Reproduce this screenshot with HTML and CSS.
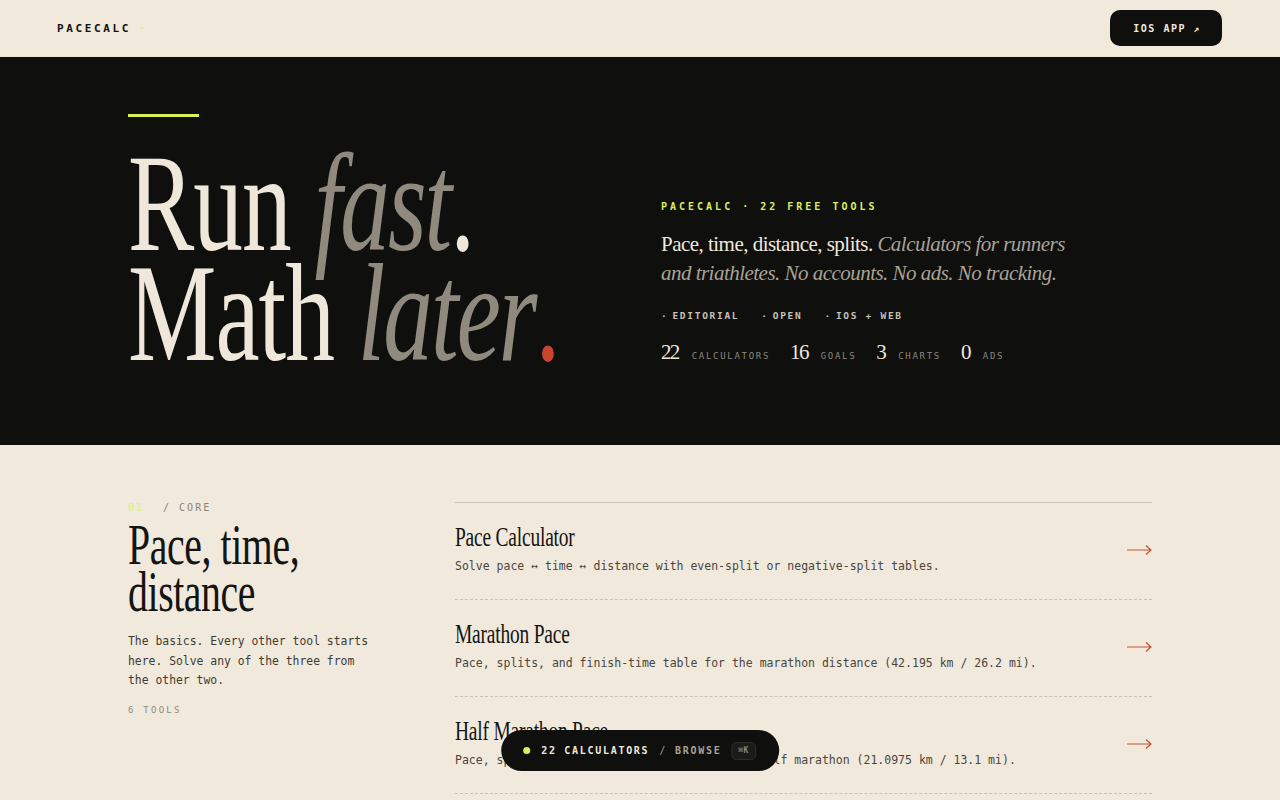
FILE: index.html
```html
<!DOCTYPE html>
<html lang="en">
<head>
    <!-- Page metadata and stylesheet -->
    <meta charset="UTF-8">
    <meta name="viewport" content="width=device-width, initial-scale=1.0">
    <title>PaceCalc — Run fast. Math later.</title>
    <link rel="stylesheet" href="styles.css">
</head>
<body>
    <!-- Top bar with the brand and the app link -->
    <header class="topbar">
        <a class="brand" href="#">PACECALC<span class="brand-dot">·</span></a>
        <a class="app-btn" href="#">IOS APP ↗</a>
    </header>

    <!-- Dark hero block -->
    <section class="hero">
        <div class="hero-inner">
            <div class="hero-left">
                <div class="hero-rule"></div>
                <h1 class="hero-title">
                    <span class="line">Run <em>fast</em>.</span>
                    <span class="line">Math <em>later</em><span class="stop-red">.</span></span>
                </h1>
            </div>
            <div class="hero-right">
                <p class="eyebrow">PACECALC · 22 FREE TOOLS</p>
                <p class="lede">Pace, time, distance, splits. <em>Calculators for runners and triathletes. No accounts. No ads. No tracking.</em></p>
                <ul class="tags">
                    <li><span class="tag-dot">·</span>EDITORIAL</li>
                    <li><span class="tag-dot">·</span>OPEN</li>
                    <li><span class="tag-dot">·</span>IOS + WEB</li>
                </ul>
                <div class="stats">
                    <span class="num">22</span><span class="lbl">CALCULATORS</span>
                    <span class="num">16</span><span class="lbl">GOALS</span>
                    <span class="num">3</span><span class="lbl">CHARTS</span>
                    <span class="num">0</span><span class="lbl">ADS</span>
                </div>
            </div>
        </div>
    </section>

    <!-- Calculator groups -->
    <section class="group">
        <div class="group-info">
            <p class="group-kicker"><span class="group-no">01</span><span>/ CORE</span></p>
            <h2 class="group-title">Pace, time,<br>distance</h2>
            <p class="group-desc">The basics. Every other tool starts here. Solve any of the three from the other two.</p>
            <p class="group-count">6 TOOLS</p>
        </div>
        <ul class="tool-list">
            <li class="tool">
                <div class="tool-text">
                    <h3 class="tool-name">Pace Calculator</h3>
                    <p class="tool-desc">Solve pace ↔ time ↔ distance with even-split or negative-split tables.</p>
                </div>
                <svg class="tool-arrow" width="25" height="12" viewBox="0 0 25 12"><path d="M0 6H24M19 1.5L24 6L19 10.5" fill="none" stroke="currentColor" stroke-width="1.2"/></svg>
            </li>
            <li class="tool">
                <div class="tool-text">
                    <h3 class="tool-name">Marathon Pace</h3>
                    <p class="tool-desc">Pace, splits, and finish-time table for the marathon distance (42.195 km / 26.2 mi).</p>
                </div>
                <svg class="tool-arrow" width="25" height="12" viewBox="0 0 25 12"><path d="M0 6H24M19 1.5L24 6L19 10.5" fill="none" stroke="currentColor" stroke-width="1.2"/></svg>
            </li>
            <li class="tool">
                <div class="tool-text">
                    <h3 class="tool-name">Half Marathon Pace</h3>
                    <p class="tool-desc">Pace, splits, and finish-time table for the half marathon (21.0975 km / 13.1 mi).</p>
                </div>
                <svg class="tool-arrow" width="25" height="12" viewBox="0 0 25 12"><path d="M0 6H24M19 1.5L24 6L19 10.5" fill="none" stroke="currentColor" stroke-width="1.2"/></svg>
            </li>
            <li class="tool">
                <div class="tool-text">
                    <h3 class="tool-name">10K Pace</h3>
                    <p class="tool-desc">Pace, splits, and finish-time table for the 10 kilometre distance (6.2 mi).</p>
                </div>
                <svg class="tool-arrow" width="25" height="12" viewBox="0 0 25 12"><path d="M0 6H24M19 1.5L24 6L19 10.5" fill="none" stroke="currentColor" stroke-width="1.2"/></svg>
            </li>
            <li class="tool">
                <div class="tool-text">
                    <h3 class="tool-name">5K Pace</h3>
                    <p class="tool-desc">Pace, splits, and finish-time table for the 5 kilometre distance (3.1 mi).</p>
                </div>
                <svg class="tool-arrow" width="25" height="12" viewBox="0 0 25 12"><path d="M0 6H24M19 1.5L24 6L19 10.5" fill="none" stroke="currentColor" stroke-width="1.2"/></svg>
            </li>
            <li class="tool">
                <div class="tool-text">
                    <h3 class="tool-name">Split Calculator</h3>
                    <p class="tool-desc">Lap-by-lap splits for any distance, with custom lap length.</p>
                </div>
                <svg class="tool-arrow" width="25" height="12" viewBox="0 0 25 12"><path d="M0 6H24M19 1.5L24 6L19 10.5" fill="none" stroke="currentColor" stroke-width="1.2"/></svg>
            </li>
        </ul>
    </section>

    <!-- Floating browse pill -->
    <div class="browse-pill">
        <span class="pill-dot"></span>
        <span class="pill-count">22 CALCULATORS</span>
        <span class="pill-sep">/</span>
        <span class="pill-browse">BROWSE</span>
        <kbd class="pill-kbd">⌘K</kbd>
    </div>
</body>
</html>
```

FILE: styles.css
```css
/* Base page */
body {
    margin: 0;
    background: #f0e9dc;
    color: #141412;
    font-family: "DejaVu Sans Mono", "Liberation Mono", monospace;
}

p, h1, h2, h3, ul {
    margin: 0;
    padding: 0;
}

ul {
    list-style: none;
}

a {
    text-decoration: none;
    color: inherit;
}

/* Top bar */
.topbar {
    height: 56px;
    display: flex;
    align-items: center;
    justify-content: space-between;
    padding: 0 58px 0 57px;
    border-bottom: 1px solid #e8e0d1;
}

.brand {
    font-size: 11px;
    font-weight: bold;
    letter-spacing: 0.24em;
    color: #121210;
}

.brand-dot {
    color: #d9ec7a;
    margin-left: 8px;
}

.app-btn {
    height: 36px;
    display: flex;
    align-items: center;
    padding: 0 21px 0 23px;
    background: #0f0f0e;
    color: #f0e9dc;
    border-radius: 10px;
    font-size: 10px;
    font-weight: bold;
    letter-spacing: 0.15em;
}

/* Hero */
.hero {
    background: #0f0f0e;
    color: #efe8da;
    padding: 57px 128px 77px;
}

.hero-inner {
    display: grid;
    grid-template-columns: 533px 1fr;
}

.hero-rule {
    width: 71px;
    height: 3px;
    background: #d6f25a;
    margin-bottom: 31px;
}

/* Big condensed serif headline */
.hero-title {
    font-family: "Liberation Serif", serif;
    font-weight: normal;
    font-size: 140px;
    line-height: 110px;
    letter-spacing: -0.01em;
    white-space: nowrap;
    transform: scaleX(0.71);
    transform-origin: left top;
}

.hero-title .line {
    display: block;
}

.hero-title em {
    color: #8f897e;
    letter-spacing: -0.02em;
}

.stop-red {
    color: #c8442d;
}

.hero-right {
    align-self: end;
    padding-bottom: 0;
}

.eyebrow {
    font-size: 10px;
    line-height: 14px;
    font-weight: bold;
    letter-spacing: 0.3em;
    color: #d6f25a;
}

.lede {
    margin-top: 16px;
    max-width: 420px;
    font-family: "Liberation Serif", serif;
    font-size: 21px;
    line-height: 29px;
    letter-spacing: -0.025em;
    color: #efe8da;
}

.lede em {
    color: #a9a396;
}

.tags {
    margin-top: 21px;
    display: flex;
    gap: 22px;
    font-size: 9.5px;
    line-height: 14px;
    font-weight: bold;
    letter-spacing: 0.18em;
    color: #c8c2b5;
}

.tag-dot {
    margin-right: 4px;
}

.stats {
    margin-top: 17px;
    display: flex;
    align-items: baseline;
    line-height: 24px;
}

.stats .num {
    font-family: "Liberation Serif", serif;
    font-size: 21px;
    letter-spacing: -0.08em;
    color: #efe8da;
    margin-right: 13px;
}

.stats .lbl {
    font-size: 9px;
    letter-spacing: 0.19em;
    color: #8c877c;
    margin-right: 20px;
}

/* Calculator group */
.group {
    display: grid;
    grid-template-columns: 250px 1fr;
    column-gap: 77px;
    padding: 57px 128px 120px;
}

.group-kicker {
    display: flex;
    gap: 19px;
    font-size: 10px;
    line-height: 12px;
    letter-spacing: 0.2em;
    color: #8a8479;
}

.group-no {
    color: #dcef86;
}

.group-title {
    margin-top: 8px;
    font-family: "Liberation Serif", serif;
    font-weight: normal;
    font-size: 56px;
    line-height: 47px;
    letter-spacing: -0.01em;
    white-space: nowrap;
    transform: scaleX(0.71);
    transform-origin: left top;
}

.group-desc {
    margin-top: 16px;
    font-size: 11.4px;
    line-height: 19.5px;
    color: #3f3b35;
}

.group-count {
    margin-top: 13px;
    font-size: 9px;
    line-height: 12px;
    letter-spacing: 0.25em;
    color: #8f897e;
}

/* Tool rows */
.tool-list {
    border-top: 1px solid #cbc2b2;
}

.tool {
    display: flex;
    align-items: center;
    justify-content: space-between;
    padding: 18px 0 24px;
    border-bottom: 1px dashed #cbc2b2;
}

.tool-name {
    display: inline-block;
    font-family: "Liberation Serif", serif;
    font-weight: normal;
    font-size: 27px;
    line-height: 32px;
    letter-spacing: -0.01em;
    white-space: nowrap;
    transform: scaleX(0.72);
    transform-origin: left top;
    color: #141412;
}

.tool-desc {
    margin-top: 4px;
    font-size: 11.5px;
    line-height: 18px;
    color: #4a463f;
}

.tool-arrow {
    display: block;
    color: #c0533a;
    flex-shrink: 0;
    margin-top: 3px;
}

/* Floating pill at the bottom */
.browse-pill {
    position: fixed;
    left: 50%;
    bottom: 29px;
    transform: translateX(-50%);
    height: 41px;
    display: flex;
    align-items: center;
    padding: 0 23px 0 22px;
    background: #0f0f0e;
    border-radius: 21px;
    font-size: 10px;
    font-weight: bold;
    letter-spacing: 0.17em;
    white-space: nowrap;
}

.pill-dot {
    width: 7px;
    height: 7px;
    border-radius: 50%;
    background: #d6f25a;
    margin-right: 11px;
}

.pill-count {
    color: #efe8da;
}

.pill-sep {
    color: #8c877c;
    margin: 0 8px 0 10px;
}

.pill-browse {
    color: #a9a396;
}

.pill-kbd {
    margin-left: 10px;
    padding: 0 6px;
    height: 16px;
    line-height: 16px;
    border: 1px solid #2d2d2a;
    background: #1b1b19;
    border-radius: 5px;
    font-family: inherit;
    font-size: 8px;
    letter-spacing: 0.05em;
    color: #8c877c;
}
```
